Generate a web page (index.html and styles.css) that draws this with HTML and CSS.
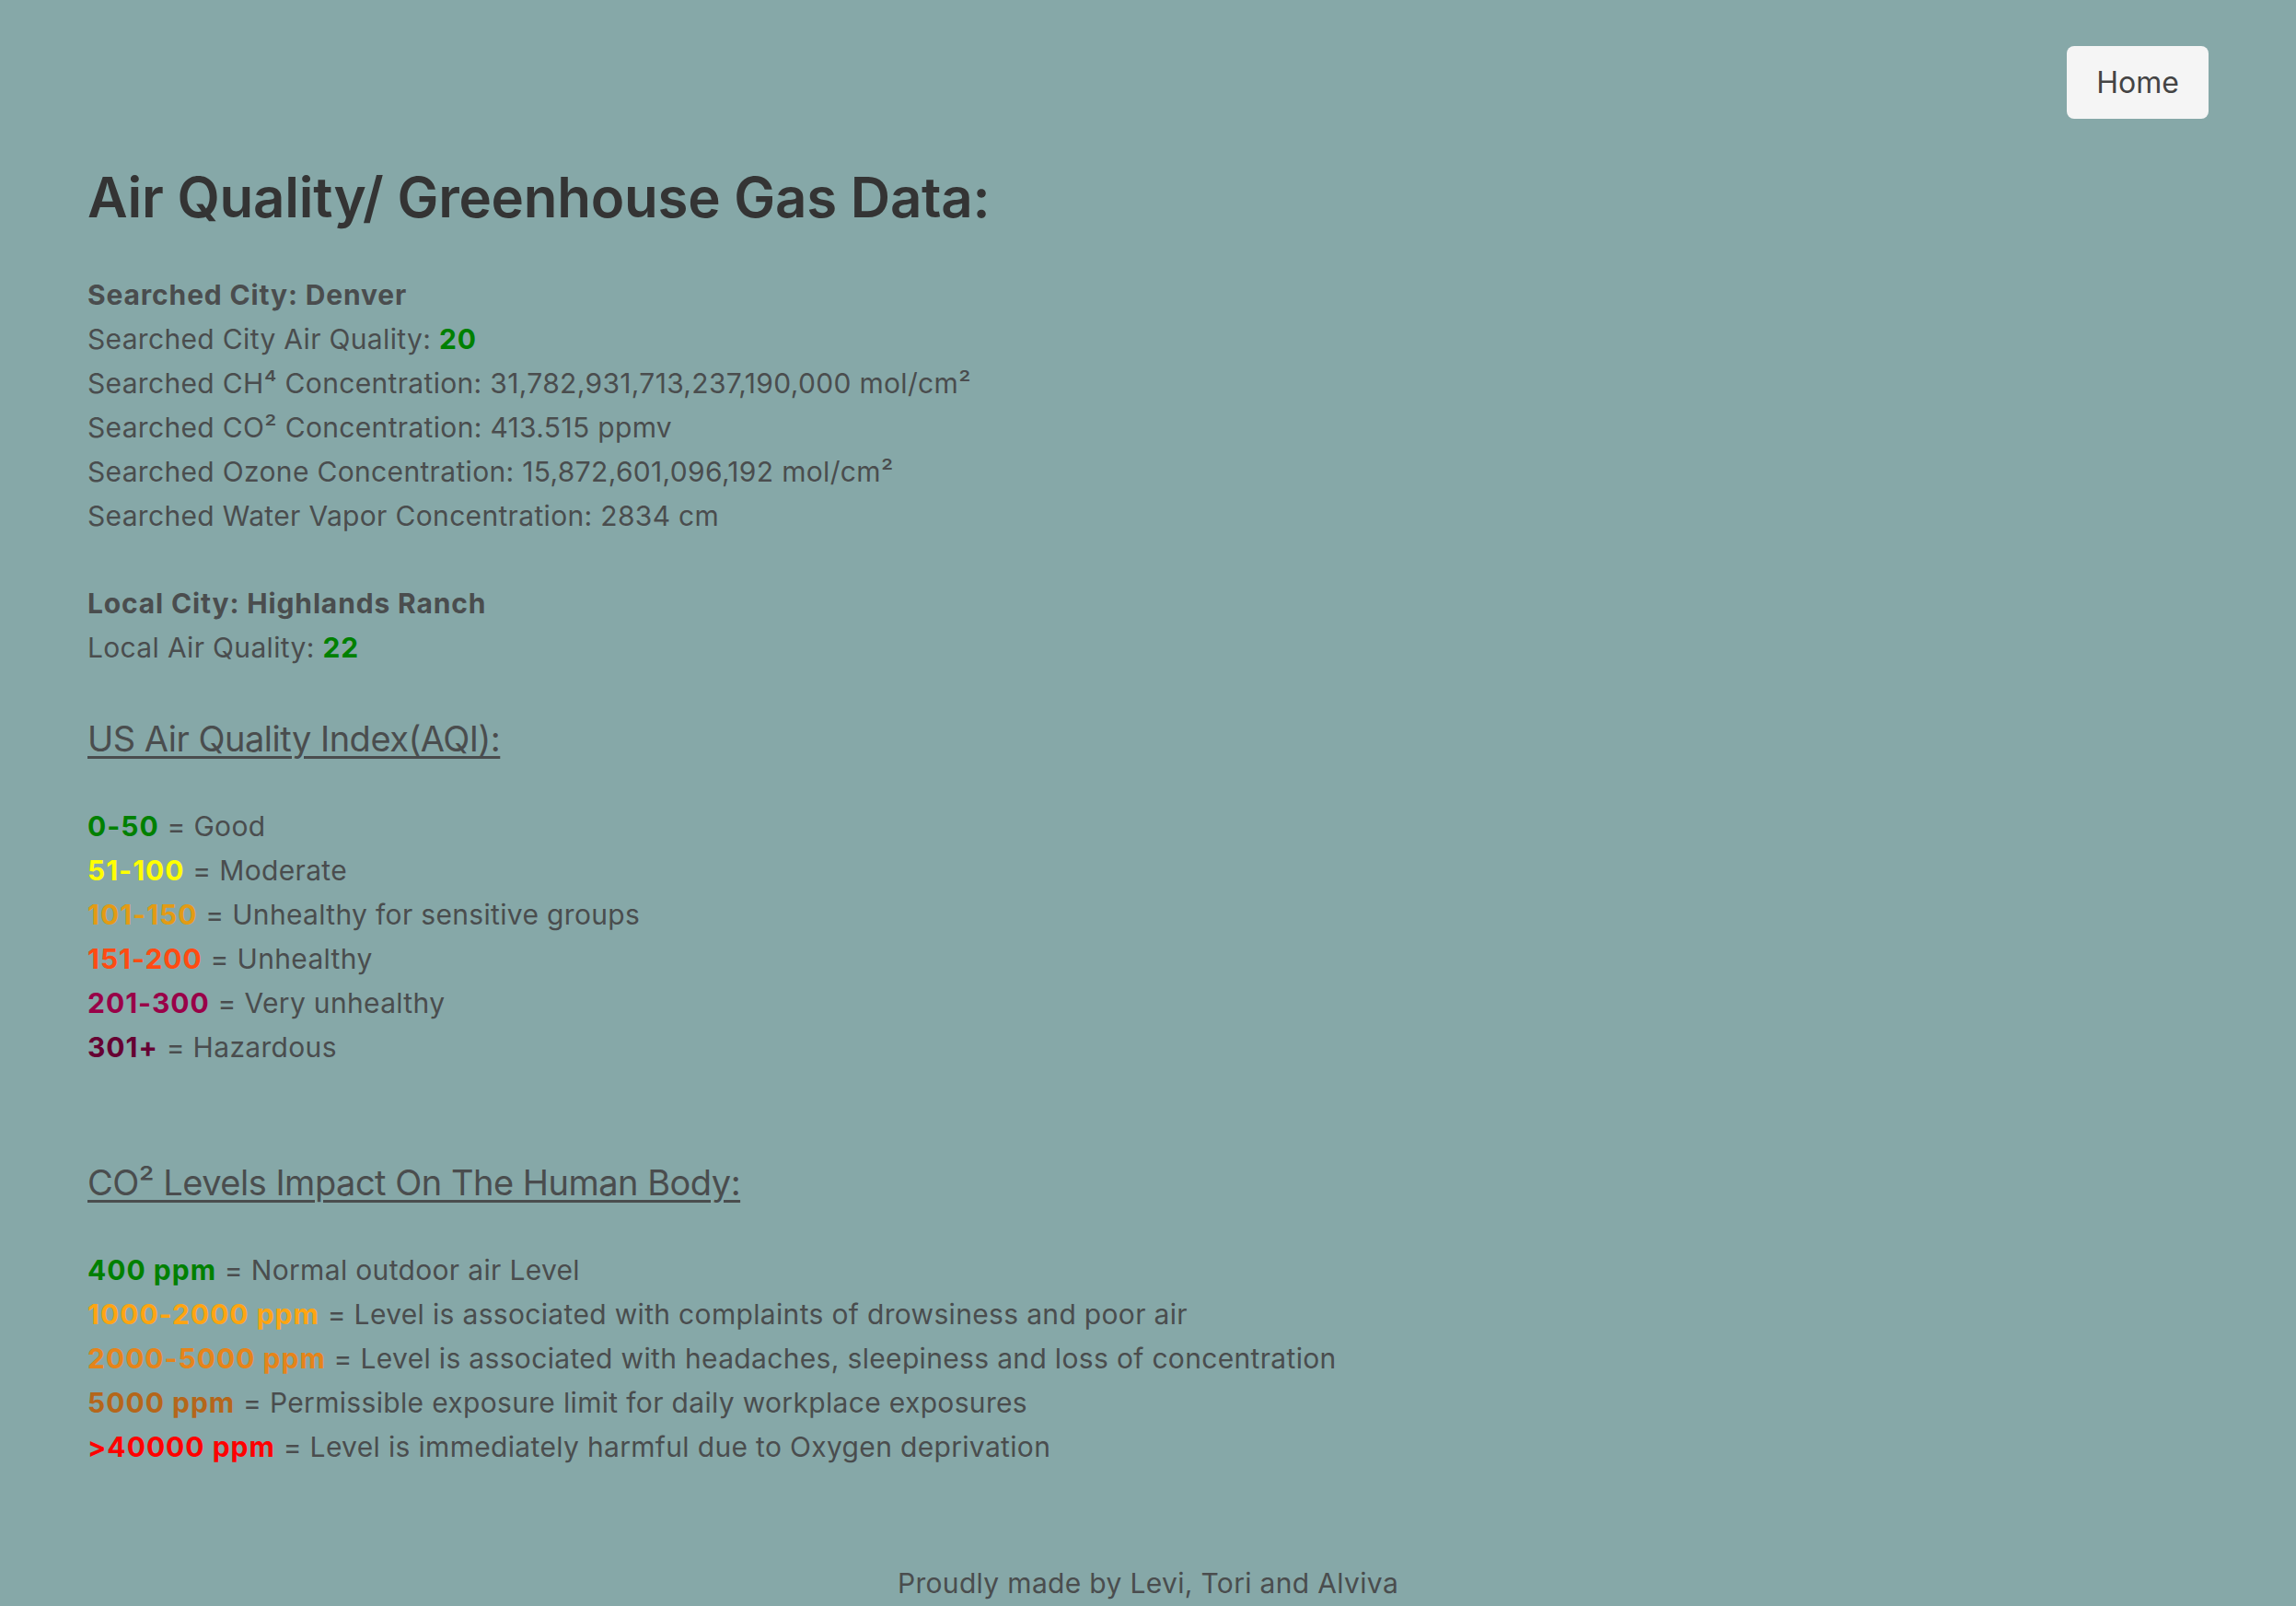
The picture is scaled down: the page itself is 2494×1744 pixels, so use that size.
FILE: index.html
```html
<!DOCTYPE html>
<html lang="en">
<head>
<meta charset="utf-8">
<title>Air Quality / Greenhouse Gas Data</title>
<link rel="stylesheet" href="styles.css">
</head>
<body>
<header class="top">
  <button class="home-btn">Home</button>
</header>
<main class="content">
  <h1 class="title">Air Quality/ Greenhouse Gas Data:</h1>
  <section class="block">
    <p class="line strong">Searched City: Denver</p>
    <p class="line">Searched City Air Quality: <b class="c-good">20</b></p>
    <p class="line">Searched CH⁴ Concentration: 31,782,931,713,237,190,000 mol/cm²</p>
    <p class="line">Searched CO² Concentration: 413.515 ppmv</p>
    <p class="line">Searched Ozone Concentration: 15,872,601,096,192 mol/cm²</p>
    <p class="line">Searched Water Vapor Concentration: 2834 cm</p>
  </section>
  <section class="block block-local">
    <p class="line strong">Local City: Highlands Ranch</p>
    <p class="line">Local Air Quality: <b class="c-good">22</b></p>
  </section>
  <h2 class="subhead subhead-aqi">US Air Quality Index(AQI):</h2>
  <section class="block">
    <p class="line"><b class="c-good">0-50</b> = Good</p>
    <p class="line"><b class="c-moderate">51-100</b> = Moderate</p>
    <p class="line"><b class="c-sensitive">101-150</b> = Unhealthy for sensitive groups</p>
    <p class="line"><b class="c-unhealthy">151-200</b> = Unhealthy</p>
    <p class="line"><b class="c-very">201-300</b> = Very unhealthy</p>
    <p class="line"><b class="c-hazard">301+</b> = Hazardous</p>
  </section>
  <h2 class="subhead subhead-co2">CO² Levels Impact On The Human Body:</h2>
  <section class="block">
    <p class="line"><b class="c-good">400 ppm</b> = Normal outdoor air Level</p>
    <p class="line"><b class="c-co1">1000-2000 ppm</b> = Level is associated with complaints of drowsiness and poor air</p>
    <p class="line"><b class="c-co2">2000-5000 ppm</b> = Level is associated with headaches, sleepiness and loss of concentration</p>
    <p class="line"><b class="c-co3">5000 ppm</b> = Permissible exposure limit for daily workplace exposures</p>
    <p class="line"><b class="c-red">&gt;40000 ppm</b> = Level is immediately harmful due to Oxygen deprivation</p>
  </section>
</main>
<footer class="footer">Proudly made by Levi, Tori and Alviva</footer>
</body>
</html>
```

FILE: styles.css
```css
html, body {
  margin: 0;
  padding: 0;
}
body {
  background: #86a8a8;
  font-family: Inter, "Noto Sans", "Liberation Sans", sans-serif;
  color: #4a4d4e;
  min-height: 1744px;
}
.top {
  display: flex;
  justify-content: flex-end;
  padding: 50px 95px 0 0;
}
.home-btn {
  width: 154px;
  height: 79px;
  background: #f5f5f5;
  border: none;
  border-radius: 8px;
  font-family: Inter, "Noto Sans", "Liberation Sans", sans-serif;
  font-size: 32px;
  color: #444;
  padding: 0;
}
.content {
  padding: 0 95px;
}
.title {
  margin: 49px 0 46px;
  font-size: 60px;
  line-height: 72px;
  font-weight: 600;
  color: #343434;
  letter-spacing: -0.25px;
}
.block {
  margin: 0;
}
.block-local {
  margin-top: 47px;
}
.line {
  margin: 0;
  font-size: 30px;
  line-height: 48px;
  letter-spacing: 0.33px;
}
.line b {
  font-weight: 700;
  letter-spacing: 1px;
}
.strong {
  font-weight: 700;
  letter-spacing: 0.85px;
}
.subhead {
  margin: 0;
  font-size: 38px;
  line-height: 60px;
  font-weight: 400;
  letter-spacing: -0.5px;
  text-decoration: underline;
  text-decoration-thickness: 3px;
  text-underline-offset: 5px;
}
.subhead-aqi {
  margin-top: 45px;
  margin-bottom: 41px;
}
.subhead-co2 {
  margin-top: 93px;
  margin-bottom: 41px;
}
.c-good { color: #008000; }
.c-moderate { color: #ffff00; }
.c-sensitive { color: #e39b14; }
.c-unhealthy { color: #ff4b12; }
.c-very { color: #990048; }
.c-hazard { color: #660033; }
.c-co1 { color: #ffa512; }
.c-co2 { color: #e5841a; }
.c-co3 { color: #b5661a; }
.c-red { color: #ff0000; }
.footer {
  margin-top: 100px;
  text-align: center;
  font-size: 30px;
  line-height: 48px;
  letter-spacing: 0.33px;
}
```
